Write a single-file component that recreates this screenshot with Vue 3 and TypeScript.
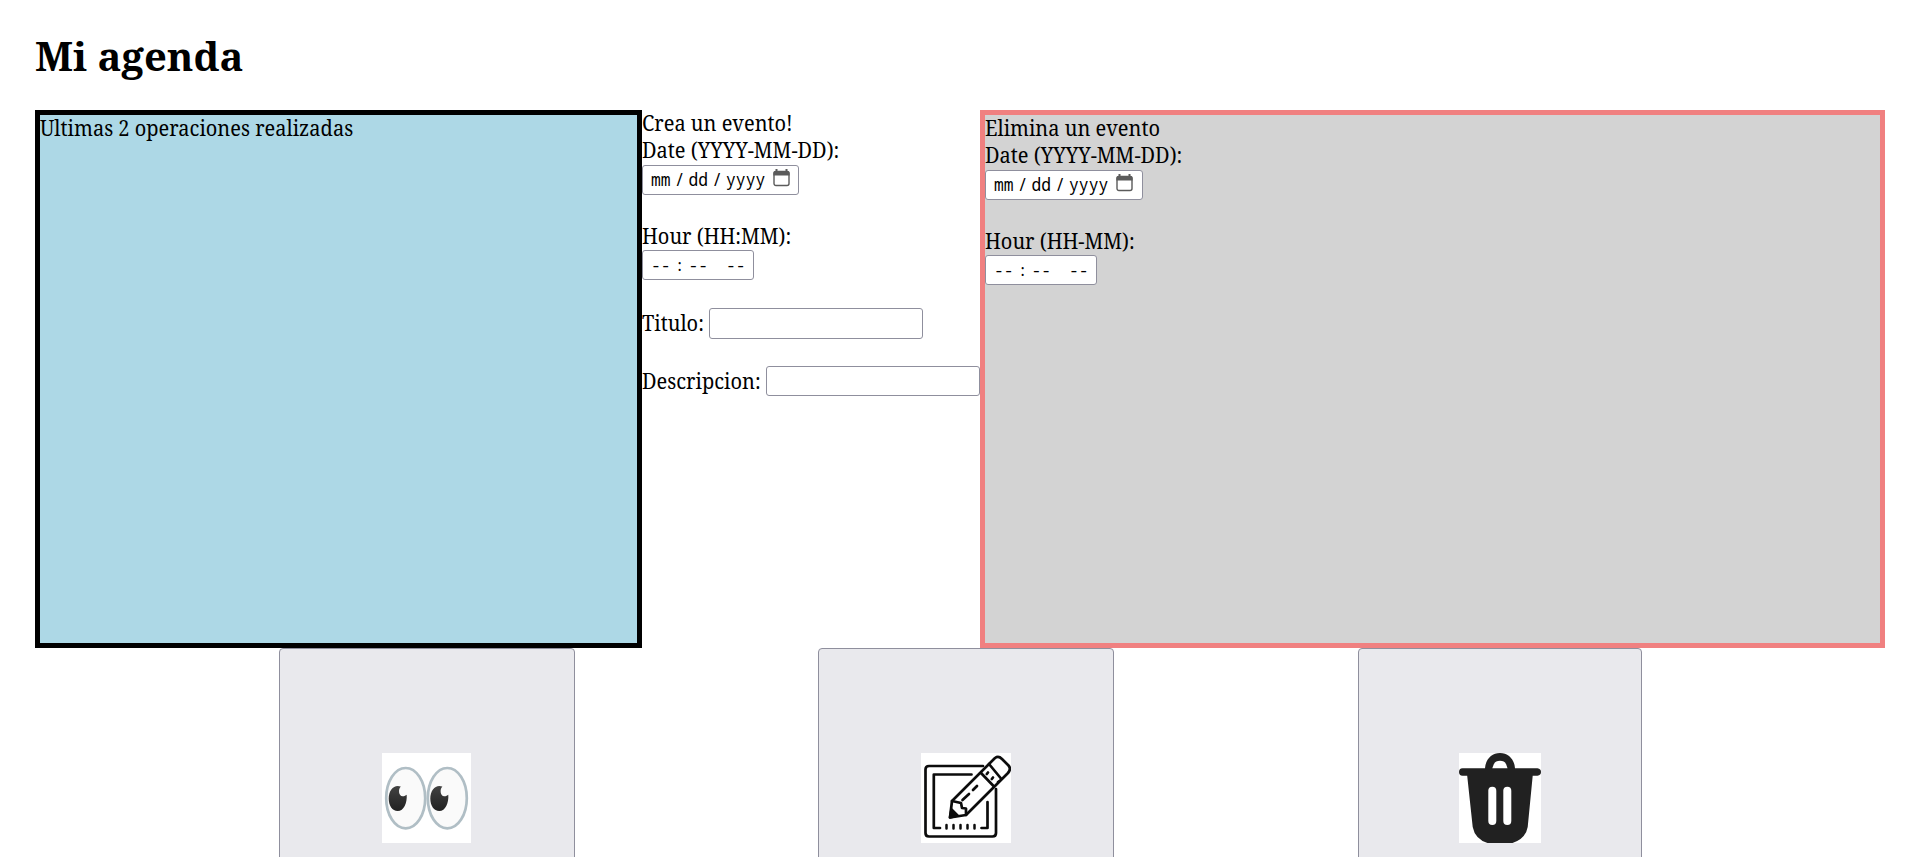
<script setup lang="ts">
interface Field {
  label: string
  kind: 'date' | 'time' | 'text'
}
interface Panel {
  name: string
  title: string
  fields: Field[]
}
const panels: Panel[] = [
  {
    name: 'create',
    title: 'Crea un evento!',
    fields: [
      { label: 'Date (YYYY-MM-DD):', kind: 'date' },
      { label: 'Hour (HH:MM):', kind: 'time' },
      { label: 'Titulo:', kind: 'text' },
      { label: 'Descripcion:', kind: 'text' },
    ],
  },
  {
    name: 'delete',
    title: 'Elimina un evento',
    fields: [
      { label: 'Date (YYYY-MM-DD):', kind: 'date' },
      { label: 'Hour (HH-MM):', kind: 'time' },
    ],
  },
]
</script>

<template>
  <main class="page">
    <h1>Mi agenda</h1>
    <div class="panels">
      <section class="panel log"><p>Ultimas 2 operaciones realizadas</p></section>
      <section v-for="p in panels" :key="p.name" class="panel" :class="p.name">
        <p>{{ p.title }}</p>
        <div v-for="f in p.fields" :key="f.label" class="field" :class="f.kind">
          <label>{{ f.label }}</label>
          <div v-if="f.kind === 'date'" class="box">
            <span class="seg">mm</span><span class="sl">/</span><span class="seg">dd</span><span class="sl">/</span><span class="seg">yyyy</span>
            <svg class="cal" width="17" height="18" viewBox="0 0 17 18">
              <path d="M3.500 0v3M13.500 0v3" stroke="#5b5b5b" stroke-width="2" />
              <rect x="1" y="2.500" width="15" height="14" rx="2" fill="none" stroke="#5b5b5b" stroke-width="1.400" />
              <path d="M.4 6.500V4Q.4 2 2.400 2h12.200Q16.600 2 16.600 4v2.500z" fill="#5b5b5b" />
            </svg>
          </div>
          <div v-else-if="f.kind === 'time'" class="box">
            <span class="seg">--</span><span class="sl">:</span><span class="seg">--</span><span class="seg ampm">--</span>
          </div>
          <input v-else type="text" />
        </div>
      </section>
    </div>
    <div class="actions">
      <button type="button" class="see" aria-label="Ver">
        <svg width="89" height="90" viewBox="0 0 89 90">
          <defs><linearGradient id="pupil" x1="0" y1="0" x2="0" y2="1"><stop offset="0" stop-color="#424242" /><stop offset="1" stop-color="#212121" /></linearGradient></defs>
          <path fill="#fff" d="M0 0h89v90H0z" />
          <g v-for="x in [0, 41.600]" :key="x" :transform="`translate(${x} 0)`">
            <ellipse cx="23.700" cy="45.200" rx="19.500" ry="30.200" fill="#fafafa" stroke="#b0bec5" stroke-width="2.700" />
            <path d="M18.800 33.500C16 36 16.500 43 20.700 43.300C22.500 43.300 23.700 42 24.700 41.700C25.300 50 21.800 58 15.700 58C10.300 58 6.700 52.500 6.700 45.500C6.700 36.500 12.500 31 18.800 33.500Z" fill="url(#pupil)" />
          </g>
        </svg>
      </button>
      <button type="button" aria-label="Crear">
        <svg width="90" height="90" viewBox="0 0 90 90">
          <path fill="#fff" d="M0 0h90v90H0z" />
          <g fill="none" stroke="#0c0c0c" stroke-width="2.700" stroke-linecap="round" stroke-linejoin="round">
            <path d="M62 13H8Q4.500 13 4.500 16.500V80Q4.500 83.500 8 83.500H71.500Q75 83.500 75 80V36" />
            <path d="M50.500 21.500H12.800V75H19M60.500 75H66.500V49" />
            <path stroke-width="2.500" d="M25.500 72v3.500M32.500 72v3.500M39.500 72v3.500M46.500 72v3.500M53.500 72v3.500" />
            <path fill="#fff" d="M31 48L74 5Q77.500 2.500 81 6L87.500 12.500Q90.500 16 87 20L45 62L29 64.500Z" />
            <path d="M68 11L80 25.500M60 20L73 33.500M31 48L40 50L41 55L45 55.500V62M41.500 47L48 41M52 37L56 33M67 19.500L65.800 21M72 24.500L70.800 26M77 29L78.500 28" />
            <path fill="#0c0c0c" d="M30.500 56.500L29 64.500L36.500 62.500Z" />
          </g>
        </svg>
      </button>
      <button type="button" class="narrow" aria-label="Eliminar">
        <svg width="82" height="90" viewBox="0 0 82 90">
          <path fill="#fff" d="M0 0h82v90H0z" />
          <path fill="#212121" d="M3.500 15.300H26C26.500 6.500 32.500 0 41 0S55.500 6.500 56 15.300H78.500Q82 15.700 82 19T78.500 22.700H73.700L68.700 74Q66.500 86 53.500 90H28.500Q16 86 13.700 74L8.200 22.700H3.500Q0 22.500 0 19T3.500 15.300Z" />
          <path fill="#fff" d="M33.300 15.300Q34.500 7.700 41 7.700T48.500 15.300Z" />
          <rect x="29.300" y="33.700" width="8" height="38.300" rx="4" fill="#fff" />
          <rect x="44.300" y="33.700" width="8" height="38.300" rx="4" fill="#fff" />
        </svg>
      </button>
    </div>
  </main>
</template>

<style>
html, body { margin: 0; overflow: hidden; background: #fff; }
</style>
<style scoped>
.page { box-sizing: border-box; height: 100vh; padding: 0 28px 0 35px; overflow: hidden; font: 20px/27.3px "Noto Serif", "Droid Serif", "DejaVu Serif Condensed", serif; color: #000; }
h1 { margin: 0; height: 110px; padding-top: 29px; box-sizing: border-box; font-size: 40px; line-height: 54px; font-weight: 700; }
p { margin: 0; }
p, label { transform: scaleY(1.05); transform-origin: 0 21px; }
.panels { display: grid; grid-template-columns: 607px 338px 905px; height: 538px; }
.panel { box-sizing: border-box; white-space: nowrap; }
.log { background: lightblue; border: 5px solid #000; }
.delete { background: lightgray; border: 5px solid lightcoral; }
.field { display: flex; }
.date, .time { flex-direction: column; align-items: flex-start; height: 85.400px; }
.text { align-items: center; gap: 5px; height: 30.500px; margin-bottom: 27.400px; }
.box, input { box-sizing: border-box; border: 1px solid #8f8f9d; border-radius: 3px; background: #fff; height: 30.500px; }
input { width: 214px; margin: 0; padding: 0; }
.box { display: flex; align-items: center; padding-left: 8px; font-family: "Noto Sans Mono", "DejaVu Sans Mono", monospace; font-size: 16.300px; line-height: 28px; }
.date .box { width: 157px; }
.delete .date .box { width: 158px; }
.time .box { width: 112px; }
.date .seg, .date .sl { transform: scaleY(1.12); transform-origin: 0 20px; }
.sl { width: 18px; text-align: center; }
.cal { margin-left: 8px; margin-top: -4px; }
.ampm { margin-left: 18px; }
.actions { display: grid; grid-template-columns: 539px 540px 284px; padding-left: 244px; align-items: start; }
button { box-sizing: border-box; width: 296px; height: 300px; padding: 0; border: 1px solid #8f8f9d; border-radius: 4px; background: #e9e9ed; display: flex; align-items: center; justify-content: center; }
.see { padding-right: 1px; }
.narrow { width: 284px; }
</style>
